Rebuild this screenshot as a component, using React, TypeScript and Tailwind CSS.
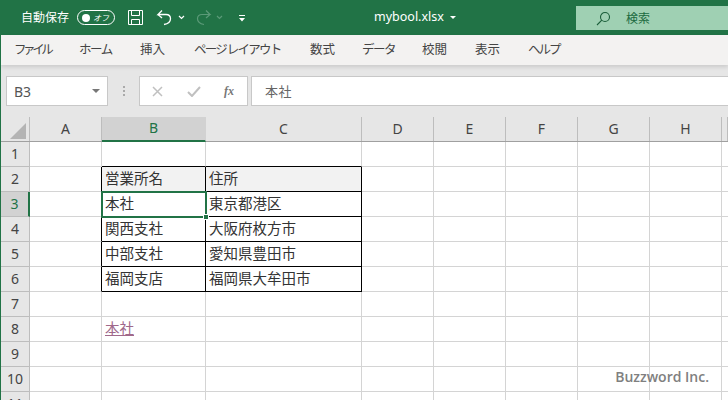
import React from "react";

const JP = "font-['Noto_Sans_CJK_JP',sans-serif]";

const colHeaders = [
  { l: "A", w: "w-[72px]" },
  { l: "B", w: "w-[104px]" },
  { l: "C", w: "w-[156px]" },
  { l: "D", w: "w-[72px]" },
  { l: "E", w: "w-[72px]" },
  { l: "F", w: "w-[72px]" },
  { l: "G", w: "w-[72px]" },
  { l: "H", w: "w-[72px]" },
  { l: "", w: "flex-1" },
];

const rows: (string | null)[][] = [
  [null, null],
  ["営業所名", "住所"],
  ["本社", "東京都港区"],
  ["関西支社", "大阪府枚方市"],
  ["中部支社", "愛知県豊田市"],
  ["福岡支店", "福岡県大牟田市"],
  [null, null],
  ["link", null],
  [null, null],
  [null, null],
  [null, null],
];

function Tab({ children, className }: { children: React.ReactNode; className: string }) {
  return <span className={"text-[12.5px] text-[#444] whitespace-nowrap pb-[2px] " + className}>{children}</span>;
}

export default function App() {
  return (
    <div className={"w-[728px] h-[400px] overflow-hidden bg-white flex flex-col border-l border-[#217346] " + JP}>
      {/* title bar */}
      <div className="h-[35px] bg-[#217346] flex items-center text-white shrink-0">
        <span className="ml-[20px] text-[12px] w-[50px] whitespace-nowrap pb-[1px]">自動保存</span>
        <div className="ml-[6px] w-[38px] h-[15px] rounded-full border border-white flex items-center justify-between pl-[4px] pr-[5px]">
          <span className="w-[8px] h-[8px] rounded-full bg-white" />
          <span className="text-[8px] leading-none italic">オフ</span>
        </div>
        <svg className="ml-[12px]" width="17" height="17" viewBox="0 0 17 17" fill="none" stroke="#fff" strokeWidth="1">
          <path d="M1.5 1.5h14v14h-14z" />
          <path d="M4.5 1.5v5h8v-5M4.5 15.5v-5h8v5" />
        </svg>
        <svg className="ml-[12px]" width="17" height="17" viewBox="0 0 17 17" fill="none" stroke="#fff" strokeWidth="1.3">
          <path d="M6 1.5 2 5.5h8c3 0 4.5 2 4.5 4.2 0 2.8-2.5 5-6.5 5.8" />
          <path d="M2 5.5 6 9" />
        </svg>
        <svg className="ml-[5px]" width="7" height="5" viewBox="0 0 7 5" fill="none" stroke="#fff" strokeWidth="1.2">
          <path d="M1 1l2.5 2.5L6 1" />
        </svg>
        <svg className="ml-[10px]" width="17" height="17" viewBox="0 0 17 17" fill="none" stroke="#5b9a78" strokeWidth="1.2">
          <path d="M11 1.5l4 4H7c-3 0-4.500 2-4.500 4.200 0 2.800 2.500 5 6.500 5.800" />
          <path d="M15 5.500 11 9" />
        </svg>
        <svg className="ml-[4px]" width="7" height="5" viewBox="0 0 7 5" fill="none" stroke="#5b9a78" strokeWidth="1.2">
          <path d="M1 1l2.500 2.500L6 1" />
        </svg>
        <svg className="ml-[15px]" width="8" height="8" viewBox="0 0 8 8" fill="#fff">
          <path d="M1 1h6v1H1zM1 4h6L4 7.500z" />
        </svg>
        <span className="ml-[128px] text-[12.5px] font-['Noto_Sans',sans-serif] w-[70px] whitespace-nowrap">mybool.xlsx</span>
        <span className="ml-[6px] w-0 h-0 border-l-[3px] border-r-[3px] border-t-[3px] border-l-transparent border-r-transparent border-t-white" />
        <div className="ml-[120px] self-start mt-[6px] flex-1 h-[24px] bg-[#9fd0b3] flex items-center">
          <svg className="ml-[20px]" width="15" height="15" viewBox="0 0 15 15" fill="none" stroke="#1b5e3a" strokeWidth="1.100">
            <circle cx="9" cy="6" r="4.500" />
            <path d="M5.800 9.200 1 14" />
          </svg>
          <span className="ml-[15px] text-[12px] text-[#1b6a40] pb-[1px]">検索</span>
        </div>
      </div>

      {/* ribbon tabs */}
      <div className="h-[30px] bg-[#f3f2f1] flex items-center shrink-0 relative z-10 shadow-[0_2px_4px_rgba(0,0,0,0.12)]">
        <Tab className="ml-[13px] w-[65px] tracking-[-3.4px]">ファイル</Tab>
        <Tab className="w-[61px] tracking-[-1.500px]">ホーム</Tab>
        <Tab className="w-[54px]">挿入</Tab>
        <Tab className="w-[116px] tracking-[-1.800px]">ページ レイアウト</Tab>
        <Tab className="w-[52px]">数式</Tab>
        <Tab className="w-[60px] tracking-[-1.500px]">データ</Tab>
        <Tab className="w-[53px]">校閲</Tab>
        <Tab className="w-[53px]">表示</Tab>
        <Tab className="tracking-[-2px]">ヘルプ</Tab>
      </div>

      {/* formula band */}
      <div className="h-[52px] bg-[#e6e6e6] shrink-0 flex items-start pt-[11px] pl-[5px]">
        <div className="w-[102px] h-[30px] bg-white border border-[#c8c8c8] flex items-center justify-between pl-[7px] pr-[7px]">
          <span className="text-[14px] text-[#555] font-['Noto_Sans',sans-serif]">B3</span>
          <span className="w-0 h-0 border-l-[4px] border-r-[4px] border-t-[4px] border-l-transparent border-r-transparent border-t-[#777]" />
        </div>
        <div className="w-[31px] h-[30px] flex flex-col items-center justify-center gap-[2px]">
          <span className="w-[2px] h-[2px] bg-[#aaa]" />
          <span className="w-[2px] h-[2px] bg-[#aaa]" />
          <span className="w-[2px] h-[2px] bg-[#aaa]" />
        </div>
        <div className="w-[109px] h-[30px] bg-white border border-[#c8c8c8] flex items-center">
          <svg className="ml-[12px]" width="11" height="11" viewBox="0 0 11 11" fill="none" stroke="#c0c0c0" strokeWidth="1.500">
            <path d="M1 1l9 9M10 1l-9 9" />
          </svg>
          <svg className="ml-[24px]" width="14" height="11" viewBox="0 0 14 11" fill="none" stroke="#c0c0c0" strokeWidth="2">
            <path d="M1 6l4 4 8-9" />
          </svg>
          <span className="ml-[23px] text-[12px] italic font-bold text-[#777] font-['Liberation_Serif',serif]">fx</span>
        </div>
        <div className="ml-[3px] flex-1 h-[30px] bg-white border-y border-l border-[#c8c8c8] flex items-center pl-[13px]">
          <span className="text-[13px] text-[#666] tracking-[0.5px] pb-[1px]">本社</span>
        </div>
      </div>

      {/* sheet */}
      <div className="relative flex-1 min-h-0">
        {/* column headers */}
        <div className="flex h-[25px] bg-[#e6e6e6] border-b border-[#a0a0a0]">
          <div className="w-[29px] border-r border-[#bdbdbd] flex items-end justify-end p-[2px] pb-[1px]">
            <svg width="18" height="18" viewBox="0 0 18 18"><path d="M17 1v16H1z" fill="#b4b4b4" /></svg>
          </div>
          {colHeaders.map((c) => (
            <div
              key={c.l || "rest"}
              className={
                c.w +
                " flex items-center justify-center pb-[2px] text-[14px] font-['Noto_Sans',sans-serif] border-r " +
                (c.l === "B"
                  ? "bg-[#d2d2d2] text-[#217346] border-[#d2d2d2] -mb-px border-b-2 border-b-[#217346]"
                  : "text-[#444] border-[#bdbdbd]")
              }
            >
              {c.l}
            </div>
          ))}
        </div>
        {/* rows */}
        {rows.map((r, i) => {
          const inTable = i >= 1 && i <= 5;
          return (
            <div key={i} className="flex h-[25px]">
              <div
                className={
                  "w-[29px] flex items-center justify-center pb-[2px] text-[14px] font-['Noto_Sans',sans-serif] border-b border-r " +
                  (i === 2
                    ? "bg-[#d2d2d2] text-[#217346] border-b-[#bdbdbd] border-r-2 border-r-[#217346]"
                    : "bg-[#e6e6e6] text-[#444] border-[#bdbdbd]")
                }
              >
                {i + 1}
              </div>
              <div className={"w-[72px] border-b border-[#d4d4d4] border-r " + (inTable ? "border-r-black" : "")} />
              <div
                className={
                  "w-[104px] pl-[3px] pb-[2px] flex items-center text-[14.500px] whitespace-nowrap border-r border-b " +
                  (inTable || i === 0 ? "border-b-black " : "border-b-[#d4d4d4] ") +
                  (inTable ? "border-r-black text-[#333] " : "border-r-[#d4d4d4] ") +
                  (i === 1 ? "bg-[#f2f2f2]" : "")
                }
              >
                {r[0] === "link" ? <span className="underline text-[#a0688a]">本社</span> : r[0]}
              </div>
              <div
                className={
                  "w-[156px] pl-[3px] pb-[2px] flex items-center text-[14.500px] text-[#333] whitespace-nowrap border-r border-b " +
                  (inTable || i === 0 ? "border-b-black " : "border-b-[#d4d4d4] ") +
                  (inTable ? "border-r-black " : "border-r-[#d4d4d4] ") +
                  (i === 1 ? "bg-[#f2f2f2]" : "")
                }
              >
                {r[1]}
              </div>
              <div className="w-[72px] border-r border-b border-[#d4d4d4]" />
              <div className="w-[72px] border-r border-b border-[#d4d4d4]" />
              <div className="w-[72px] border-r border-b border-[#d4d4d4]" />
              <div className="w-[72px] border-r border-b border-[#d4d4d4]" />
              <div className="w-[72px] border-r border-b border-[#d4d4d4]" />
              <div className="flex-1 border-b border-[#d4d4d4]" />
            </div>
          );
        })}
        {/* active cell */}
        <div className="absolute left-[100px] top-[74px] w-[106px] h-[27px] border-2 border-[#217346]">
          <span className="absolute -right-[4px] -bottom-[4px] w-[6px] h-[6px] bg-[#217346] border border-white" />
        </div>
        {/* watermark */}
        <span className="absolute right-[19px] top-[249px] text-[14px] font-semibold text-[#808080] font-['Open_Sans',sans-serif]">Buzzword Inc.</span>
      </div>
    </div>
  );
}
